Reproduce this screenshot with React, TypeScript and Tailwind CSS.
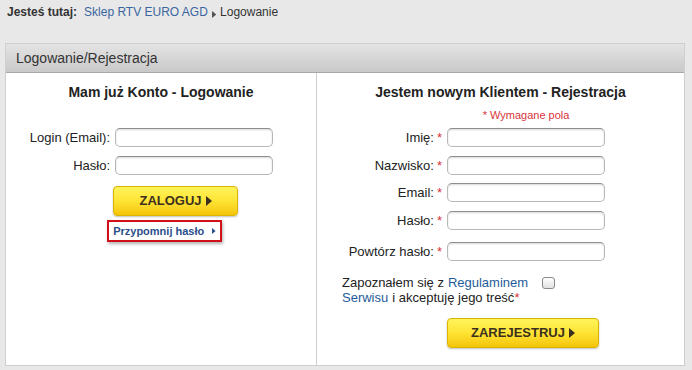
import React from 'react';

const Arrow = ({ size = 8, color = '#333' }: { size?: number; color?: string }) => (
  <svg width={size * 0.6} height={size} viewBox="0 0 6 10" className="inline-block">
    <path d="M0 0 L6 5 L0 10 Z" fill={color} />
  </svg>
);

const Field = () => (
  <input
    type="text"
    className="h-[19px] w-[158px] rounded-[5px] border border-[#b8b8b8] border-t-[#8f8f8f] bg-white shadow-[inset_0_1px_2px_rgba(0,0,0,0.15)] outline-none"
  />
);

const YellowButton = ({ label, width }: { label: string; width: string }) => (
  <button
    className={`${width} h-[30px] rounded-[4px] border border-[#d9b400] bg-gradient-to-b from-[#fff45a] via-[#ffe433] to-[#f4c400] shadow-[0_1px_2px_rgba(0,0,0,0.25)] flex items-center justify-center gap-[4px] text-[13px] font-bold text-[#3b3020]`}
  >
    {label}
    <Arrow size={10} color="#3b3020" />
  </button>
);

const Star = () => <span className="text-[#d8343a] ml-[3px]">*</span>;

export default function App() {
  const regFields = ['Imię:', 'Nazwisko:', 'Email:', 'Hasło:'];

  return (
    <div
      className="w-[692px] h-[370px] overflow-hidden bg-[#e8e8e8] text-[#333]"
      style={{ fontFamily: '"Liberation Sans", Arial, sans-serif' }}
    >
      {/* Breadcrumb */}
      <div className="pl-[7px] pt-[3px] h-[43px] text-[12px] flex items-start gap-[4px]">
        <span className="font-bold text-[#333] mr-[3px]">Jesteś tutaj:</span>
        <span className="text-[#3a66a0]">Sklep RTV EURO AGD</span>
        <span className="mt-[2px]"><Arrow size={7} color="#555" /></span>
        <span>Logowanie</span>
      </div>

      {/* Panel */}
      <div className="ml-[5px] w-[680px] border border-[#cfcfcf] bg-white">
        <div className="h-[29px] pl-[10px] flex items-center text-[14px] text-[#333] bg-gradient-to-b from-[#e4e4e4] to-[#c9c9c9] border-b border-[#a8a8a8]">
          Logowanie/Rejestracja
        </div>

        <div className="flex h-[292px]">
          {/* Login */}
          <div className="w-[311px] border-r border-[#cfcfcf] pt-[11px]">
            <div className="text-center text-[14px] font-bold leading-[17px] text-[#222]">
              Mam już Konto - Logowanie
            </div>
            <div className="mt-[27px] grid grid-cols-[104px_auto] gap-x-[5px] gap-y-[8px] items-center text-[13px] text-[#222]">
              <span className="text-right">Login (Email):</span>
              <Field />
              <span className="text-right">Hasło:</span>
              <Field />
            </div>
            <div className="mt-[11px] ml-[107px]">
              <YellowButton label="ZALOGUJ" width="w-[125px]" />
            </div>
            <div className="mt-[4px] ml-[101px] w-[115px] h-[22px] border-2 border-[#d0101a] shadow-[1px_2px_3px_rgba(0,0,0,0.3)] flex items-center justify-center gap-[8px] text-[11px] font-bold text-[#2c4f8c]">
              Przypomnij hasło
              <Arrow size={6} color="#2c4f8c" />
            </div>
          </div>

          {/* Register */}
          <div className="flex-1 pt-[11px]">
            <div className="text-center text-[14px] font-bold leading-[17px] text-[#222]">
              Jestem nowym Klientem - Rejestracja
            </div>
            <div className="mt-[8px] grid grid-cols-[125px_auto] gap-x-[5px] items-center text-[13px]">
              <span />
              <span className="w-[158px] text-center text-[11px] leading-[13px] text-[#d8343a]">* Wymagane pola</span>
            </div>
            <div className="mt-[6px] grid grid-cols-[125px_auto] gap-x-[5px] gap-y-[8px] items-center text-[13px] text-[#222]">
              {regFields.map(f => (
                <React.Fragment key={f}>
                  <span className="text-right">{f}<Star /></span>
                  <Field />
                </React.Fragment>
              ))}
            </div>
            <div className="mt-[12px] grid grid-cols-[125px_auto] gap-x-[5px] items-center text-[13px] text-[#222]">
              <span className="text-right">Powtórz hasło:<Star /></span>
              <Field />
            </div>
            <div className="mt-[13px] ml-[25px] flex items-start gap-[6px] text-[13px] leading-[15px] text-[#222]">
              <div className="w-[194px] flex flex-col">
                <div className="flex gap-[4px]">
                  <span>Zapoznałem się z</span>
                  <span className="text-[#1f5c99]">Regulaminem</span>
                </div>
                <div className="flex gap-[4px]">
                  <span className="text-[#1f5c99]">Serwisu</span>
                  <span>i akceptuję jego treść<span className="text-[#d8343a]">*</span></span>
                </div>
              </div>
              <span className="mt-[2px] w-[13px] h-[12px] rounded-[3px] border border-[#8a8a8a] bg-gradient-to-b from-[#ffffff] to-[#e2e2e2]" />
            </div>
            <div className="mt-[13px] ml-[130px]">
              <YellowButton label="ZAREJESTRUJ" width="w-[152px]" />
            </div>
          </div>
        </div>
      </div>
    </div>
  );
}
